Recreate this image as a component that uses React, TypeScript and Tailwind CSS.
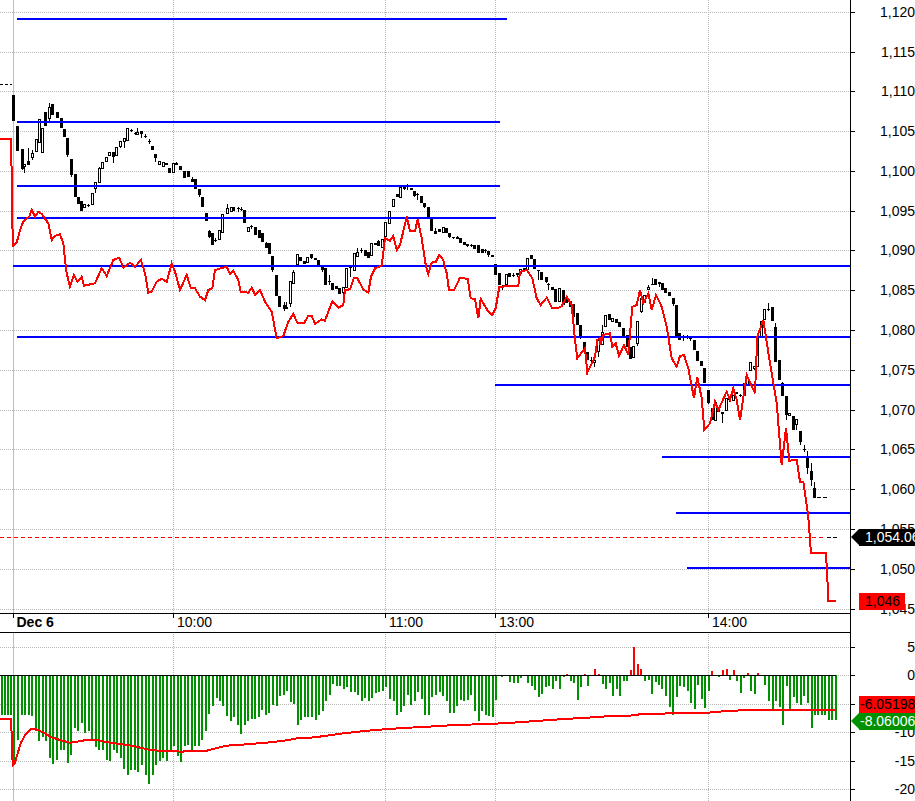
// all series traced at 3x: [x, y] with an origin per crop
const toPx = (pts: number[][], ox: number, oy: number) => pts.map(([x, y]) => [ox + x / 3, oy + y / 3])

const priceLine = [
  ...toPx(
    [[0,207],[33,207],[35,315],[37,420],[38,528],[50,518],[60,480],[70,455],[80,445],[88,440],[95,420],[105,440],[115,425],[125,432],[145,460],[155,510],[165,497],[180,493],[190,520],[195,570],[200,610],[210,650],[222,615],[232,635],[245,620],[252,647],[285,640],[305,595],[320,618],[340,570],[358,563],[370,593],[390,578],[405,590],[423,570],[435,610],[445,668],[455,665],[470,635],[485,626],[500,636],[515,580],[525,605],[540,660],[560,615],[572,653],[585,655],[600,680],[615,690],[625,660],[637,655],[645,600],[680,590],[690,612],[700,602],[715,630],[722,665],[745,668],[755,653],[765,675],[780,660],[795,695],[815,725],[830,805],[850,798],[865,755],[880,732],[892,758],[900,758]],
    0, 70,
  ),
  ...toPx(
    [[0,458],[12,460],[25,437],[35,437],[45,462],[65,448],[75,452],[85,425],[97,395],[115,413],[130,405],[135,360],[150,358],[162,323],[172,325],[190,358],[205,368],[213,320],[225,295],[245,287],[255,205],[270,212],[280,198],[290,240],[300,225],[320,140],[330,183],[345,183],[353,148],[365,205],[378,290],[385,312],[395,278],[408,275],[418,255],[430,270],[440,310],[447,360],[462,360],[480,323],[503,327],[512,385],[525,387],[535,445],[542,387],[565,425],[577,435],[587,415],[598,350],[608,350],[620,347],[655,347],[660,305],[680,300],[697,325],[710,385],[722,405],[740,383],[757,415],[773,415],[785,408],[800,380],[815,405],[825,510],[832,565],[855,535],[862,608],[885,560],[892,510],[900,505]],
    300, 170,
  ),
  ...toPx(
    [[0,225],[10,195],[30,190],[37,230],[47,220],[57,258],[72,225],[85,255],[97,110],[110,105],[120,60],[130,100],[145,70],[155,120],[168,75],[185,110],[200,170],[215,265],[230,290],[240,258],[252,255],[265,295],[282,385],[292,320],[305,385],[313,480],[330,460],[345,395],[355,420],[380,365],[390,390],[400,355],[410,390],[420,450],[440,315],[465,370],[472,200],[490,150],[510,280],[530,400],[545,585],[558,475],[568,572],[590,570],[600,635],[610,635],[625,740],[633,850],[678,850],[683,945],[685,993],[708,993]],
    600, 270,
  ),
]

const signalLine = [
  ...toPx(
    [[0,356],[33,356],[35,405],[38,497],[44,490],[62,430],[75,405],[93,386],[105,386],[130,398],[155,412],[180,420],[210,428],[245,423],[260,419],[285,419],[330,428],[400,438],[450,450],[480,452],[530,453],[545,456],[560,452],[620,452],[650,444],[680,437],[740,433],[810,427],[860,421],[900,413]],
    0, 600,
  ),
  ...toPx(
    [[0,414],[30,413],[75,408],[115,402],[165,396],[225,390],[310,384],[405,379],[465,375],[535,373],[610,370],[680,365],[780,358],[880,352],[900,350]],
    300, 600,
  ),
  ...toPx([[0,351],[18,349],[90,347],[120,343],[185,341],[220,339],[325,338],[380,333],[450,330],[705,329]], 600, 600),
]

// [x, wickTop, bodyTop, bodyBottom, wickBottom, filled]
const candleCrops: { ox: number; oy: number; rows: number[][] }[] = [
  {
    ox: 0,
    oy: 70,
    rows: [
      [40,75,75,152,152,1],[52,168,168,242,242,1],[65,238,238,298,300,1],[73,283,283,292,310,0],[85,235,272,285,285,1],[95,240,250,265,270,0],[107,208,208,245,245,0],[116,148,148,220,220,0],[127,175,175,250,250,0],[136,125,125,168,168,1],[148,100,112,148,160,0],[157,102,102,135,135,1],[170,126,126,143,143,1],[182,145,145,175,175,1],[191,178,178,200,200,1],[202,205,205,255,260,1],[212,267,267,315,320,1],[224,313,313,380,380,1],[233,381,381,403,403,1],[244,392,392,422,422,1],[253,403,403,415,415,0],[265,402,405,407,411,1],[275,368,370,406,406,0],[286,335,335,358,370,0],[296,290,295,338,338,0],[307,277,277,297,297,0],[319,262,262,275,275,0],[328,245,245,257,257,0],[340,245,245,260,278,1],[348,232,232,257,257,0],[361,213,213,232,235,0],[371,205,205,217,235,0],[382,175,175,212,212,0],[392,178,181,184,185,1],[404,186,188,192,194,1],[412,175,185,196,196,0],[424,182,182,192,205,1],[436,193,197,199,204,1],[446,208,214,216,222,1],[457,228,228,240,240,1],[466,252,252,265,275,1],[478,272,272,285,285,0],[488,277,277,290,290,0],[499,280,280,286,286,0],[508,294,294,308,308,1],[520,280,280,310,310,0],[529,276,278,285,285,1],[541,287,287,300,300,1],[553,304,304,325,325,1],[563,304,304,320,320,1],[576,320,326,335,335,1],[584,328,328,358,358,1],[596,358,358,376,382,1],[605,380,380,412,412,1],[617,430,430,452,452,1],[626,480,483,500,503,1],[637,490,490,525,525,1],[646,503,509,511,517,1],[658,480,480,510,510,0],[667,432,432,490,490,0],[680,403,415,433,433,0],[692,411,411,425,425,0],[700,410,412,422,422,1],[713,412,413,415,425,1],[722,412,416,418,423,1],[733,420,420,460,460,1],[743,470,470,485,485,0],[754,464,469,472,478,1],[764,472,472,495,495,1],[776,480,480,503,503,1],[785,490,490,517,517,1],[797,517,520,533,533,1],[808,520,520,553,553,1],[817,558,558,600,605,1],[829,615,615,677,677,1],[838,677,677,710,710,1],[851,695,705,718,722,1],[859,695,712,718,718,0],[871,632,632,702,710,0],[880,600,607,643,643,0],[892,552,552,585,585,0],
    ],
  },
  {
    ox: 300,
    oy: 170,
    rows: [
      [0,262,262,272,272,1],[12,272,272,283,283,1],[22,262,262,278,278,0],[33,252,252,263,268,1],[44,265,265,270,270,1],[54,270,270,290,290,1],[67,292,292,300,305,1],[76,295,295,345,345,1],[88,315,334,336,345,1],[97,338,338,360,360,1],[108,348,348,358,358,1],[118,355,355,372,372,1],[129,350,350,368,385,0],[139,295,295,355,355,0],[150,288,292,295,320,1],[162,250,250,302,302,0],[172,235,247,260,260,0],[183,235,239,242,248,1],[194,240,240,258,258,1],[205,245,245,263,263,1],[214,220,220,257,257,0],[226,218,218,225,225,0],[235,210,212,228,228,1],[247,208,208,233,233,0],[256,155,155,200,200,0],[268,122,122,163,163,0],[280,86,86,112,112,0],[290,72,72,82,82,1],[301,52,52,85,85,0],[311,45,52,55,60,0],[322,42,47,52,60,1],[332,53,53,60,60,1],[343,62,62,77,82,1],[352,70,72,74,90,1],[364,78,78,100,100,1],[373,100,100,112,115,1],[385,112,112,142,142,1],[394,147,147,182,182,1],[406,175,183,193,193,1],[418,176,176,186,186,1],[428,172,172,188,188,0],[439,175,175,190,190,1],[448,188,188,202,205,1],[459,200,202,205,206,1],[470,198,202,206,206,1],[481,205,205,218,218,1],[491,217,217,224,224,1],[502,222,222,228,232,1],[513,222,225,228,230,1],[523,226,226,238,238,1],[534,225,225,250,250,1],[545,238,238,250,250,1],[555,236,239,242,250,1],[565,243,243,255,260,1],[577,256,256,262,262,0],[586,283,283,315,315,1],[598,310,310,345,345,1],[607,345,349,351,360,1],[619,313,313,345,345,0],[628,308,308,320,320,1],[640,310,314,316,322,1],[652,310,310,315,322,0],[661,297,297,313,313,0],[673,295,295,303,303,1],[682,265,265,300,300,0],[694,255,255,268,268,1],[703,267,267,297,297,1],[715,300,301,304,330,1],[724,306,306,330,330,1],[737,322,322,335,340,1],[745,338,341,343,360,1],[757,350,352,360,360,1],[766,357,357,395,395,1],[778,355,355,395,395,0],[790,360,360,405,405,1],[799,382,382,400,400,1],[810,392,392,410,410,1],[820,402,402,440,440,1],[831,430,430,465,465,1],[841,465,465,500,508,1],[852,515,515,540,540,1],[861,545,545,570,570,1],[873,560,571,573,580,1],[883,571,571,578,590,0],[895,510,510,545,560,0],
    ],
  },
  {
    ox: 600,
    oy: 270,
    rows: [
      [7,165,185,225,225,0],[16,135,135,172,172,0],[28,133,133,150,150,1],[37,145,145,155,155,0],[48,147,147,158,158,1],[58,156,156,172,172,1],[70,175,175,205,205,1],[80,195,195,232,232,1],[91,232,232,268,268,1],[100,228,228,265,265,0],[112,152,152,222,228,0],[122,83,83,127,130,0],[132,75,75,100,100,0],[145,45,50,60,60,0],[155,25,42,46,46,1],[166,28,28,44,44,1],[177,37,37,42,50,1],[187,38,38,60,60,1],[196,54,54,68,68,1],[207,65,65,77,77,1],[218,85,85,103,108,1],[229,105,105,200,200,1],[238,188,188,210,210,1],[248,195,202,205,212,1],[260,195,199,202,208,1],[270,200,204,207,214,1],[281,210,210,240,240,1],[292,242,242,272,272,1],[304,273,273,288,288,1],[313,295,295,340,340,1],[325,360,360,398,402,1],[335,415,415,450,450,1],[345,395,395,452,452,0],[355,410,410,425,425,1],[367,425,425,430,458,0],[379,385,385,422,422,0],[388,384,386,391,395,1],[400,375,375,392,392,0],[409,367,367,373,373,1],[420,372,374,377,380,1],[431,340,340,378,378,0],[442,320,320,348,348,0],[451,277,277,302,302,0],[463,288,288,296,300,0],[472,203,203,290,290,0],[483,152,152,205,205,0],[493,117,117,150,150,0],[505,100,116,118,122,1],[517,110,110,152,152,1],[526,160,170,275,275,1],[538,270,270,330,330,1],[547,335,338,377,377,1],[559,378,378,435,450,1],[568,430,430,437,437,0],[580,437,437,480,480,1],[589,448,448,465,480,0],[601,483,483,517,525,1],[611,525,537,539,545,1],[622,543,563,593,612,1],[633,580,603,630,648,1],[643,635,655,683,683,1],
    ],
  },
]

const candles = candleCrops.flatMap(({ ox, oy, rows }) =>
  rows.map(([x, wt, bt, bb, wb, filled]) => ({
    x: Math.round(ox + x / 3),
    wt: Math.round(oy + wt / 3),
    bt: Math.round(oy + bt / 3),
    bb: Math.round(oy + bb / 3),
    wb: Math.round(oy + wb / 3),
    filled: !!filled,
  })),
)

// lower pane histogram, [x, bottom] at 3x, baseline at y=226
const histCrops: { ox: number; rows: number[][] }[] = [
  {
    ox: 0,
    rows: [
      [5,345],[15,345],[23,345],[33,345],[42,497],[53,422],[65,347],[75,345],[86,345],[96,348],[107,395],[117,425],[128,413],[139,425],[150,476],[159,494],[170,480],[182,452],[193,452],[204,491],[214,467],[225,385],[235,393],[245,370],[255,400],[266,395],[276,417],[288,443],[297,450],[310,452],[321,480],[331,483],[341,450],[352,460],[363,476],[373,507],[384,527],[394,510],[405,510],[415,516],[426,497],[437,527],[447,554],[459,527],[468,495],[480,483],[490,475],[501,483],[512,455],[522,440],[533,470],[543,488],[555,440],[565,437],[577,453],[586,440],[597,440],[607,420],[618,395],[628,342],[639,320],[650,295],[660,303],[670,320],[681,350],[692,365],[702,353],[714,375],[724,402],[735,377],[745,365],[755,357],[766,357],[777,352],[787,330],[798,345],[808,340],[820,315],[830,320],[840,290],[851,287],[861,273],[873,308],[882,312],[894,375],
    ],
  },
  {
    ox: 300,
    rows: [
      [3,362],[14,353],[25,353],[36,353],[47,362],[57,345],[69,335],[78,305],[90,285],[100,252],[111,260],[121,258],[132,267],[142,263],[153,276],[164,276],[174,285],[186,305],[195,296],[207,305],[217,296],[228,281],[238,278],[249,275],[258,261],[270,297],[281,305],[291,347],[303,338],[312,320],[323,285],[333,317],[345,303],[355,278],[366,297],[375,347],[387,347],[396,293],[408,287],[420,276],[429,290],[440,303],[451,339],[462,339],[471,320],[483,300],[492,303],[503,300],[513,285],[525,333],[537,365],[546,333],[558,345],[567,350],[579,353],[589,300],[607,233],[618,228],[630,248],[641,251],[653,251],[663,236],[684,251],[696,258],[705,270],[717,293],[726,282],[738,263],[747,258],[759,267],[769,243],[780,267],[791,233],[801,222],[813,243],[822,251],[834,300],[843,261],[855,222],[864,258],[885,207],[896,222],
    ],
  },
  {
    ox: 600,
    rows: [
      [9,254],[18,267],[30,251],[39,288],[51,267],[60,290],[72,243],[81,245],[93,212],[102,142],[114,192],[123,207],[135,245],[147,240],[156,282],[168,248],[177,257],[187,267],[198,288],[210,323],[219,345],[231,293],[240,258],[252,263],[264,275],[273,311],[285,327],[294,257],[306,299],[315,326],[327,275],[336,213],[357,233],[369,210],[381,207],[390,240],[402,210],[411,243],[423,281],[432,236],[444,219],[453,275],[465,284],[474,219],[486,230],[495,255],[507,305],[519,335],[528,305],[540,323],[549,377],[561,258],[570,327],[582,293],[591,311],[603,315],[612,290],[624,309],[636,386],[645,347],[654,347],[666,347],[675,347],[687,362],[696,362],[708,362],
    ],
  },
]

const ZERO = 675
const bars = histCrops.flatMap(({ ox, rows }) =>
  rows.map(([x, y]) => ({
    x: Math.round(ox + x / 3 - 1),
    h: Math.round(Math.abs(y - 226) / 3),
    up: y < 226,
  })),
)

const levels = [
  { y: 19, x1: 17, x2: 507 },
  { y: 122, x1: 17, x2: 500 },
  { y: 186, x1: 17, x2: 500 },
  { y: 218, x1: 17, x2: 496 },
  { y: 266, x1: 13, x2: 850 },
  { y: 337, x1: 17, x2: 850 },
  { y: 385, x1: 495, x2: 850 },
  { y: 457, x1: 662, x2: 850 },
  { y: 513, x1: 676, x2: 850 },
  { y: 568, x1: 687, x2: 850 },
]

const priceTicks = [
  ['1,120', 12], ['1,115', 51.5], ['1,110', 91], ['1,105', 131], ['1,100', 171], ['1,095', 211], ['1,090', 250], ['1,085', 290],
  ['1,080', 330], ['1,075', 370], ['1,070', 410], ['1,065', 449], ['1,060', 489], ['1,055', 529], ['1,050', 569], ['1,045', 609],
] as [string, number][]

const lowerTicks = [['5', 647], ['0', 675], ['-5', 704], ['-10', 732], ['-15', 761], ['-20', 789]] as [string, number][]

const times = [
  { x: 173, label: '10:00' },
  { x: 385, label: '11:00' },
  { x: 495, label: '13:00' },
  { x: 708, label: '14:00' },
]

const linePath = (pts: number[][]) => pts.map(([x, y]) => `${x.toFixed(1)},${y.toFixed(1)}`).join(' ')

function Chart() {
  return (
    <svg width={915} height={801} className="block">
      {/* grid */}
      <g stroke="#b8b8b8" strokeDasharray="1 1" shapeRendering="crispEdges">
        {[...priceTicks, ...lowerTicks].map(([label, y]) => (
          <line key={label} x1={0} x2={850} y1={Math.round(y) + 0.5} y2={Math.round(y) + 0.5} />
        ))}
        {times.map((t) => (
          <g key={t.x}>
            <line x1={t.x + 0.5} x2={t.x + 0.5} y1={0} y2={613} />
            <line x1={t.x + 0.5} x2={t.x + 0.5} y1={632} y2={801} />
          </g>
        ))}
      </g>
      <g stroke="#bdbdbd" shapeRendering="crispEdges">
        <line x1={13.5} x2={13.5} y1={0} y2={613} />
        <line x1={13.5} x2={13.5} y1={633} y2={801} />
      </g>

      {/* last price dashes */}
      <line x1={0} x2={826} y1={537.5} y2={537.5} stroke="#ff0000" strokeDasharray="4 3" shapeRendering="crispEdges" />
      <line x1={827} x2={838} y1={537.5} y2={537.5} stroke="#000" strokeDasharray="4 2" shapeRendering="crispEdges" />
      <line x1={0} x2={12} y1={84.5} y2={84.5} stroke="#000" strokeDasharray="3 2" shapeRendering="crispEdges" />
      <line x1={817} x2={827} y1={497.5} y2={497.5} stroke="#000" strokeDasharray="4 2" shapeRendering="crispEdges" />

      {/* candles */}
      <g shapeRendering="crispEdges">
        {candles.map((c, i) => (
          <g key={i}>
            <line x1={c.x + 0.5} x2={c.x + 0.5} y1={c.wt} y2={c.wb} stroke="#000" />
            {c.filled ? (
              <rect x={c.x - 1} y={c.bt} width={3} height={Math.max(c.bb - c.bt, 1)} fill="#000" />
            ) : (
              <rect x={c.x - 0.5} y={c.bt + 0.5} width={2} height={Math.max(c.bb - c.bt - 1, 1)} fill="#fff" stroke="#000" />
            )}
          </g>
        ))}
      </g>

      {/* levels */}
      <g fill="#0000ff" shapeRendering="crispEdges">
        {levels.map((l) => (
          <rect key={l.y} x={l.x1} y={l.y - 1} width={l.x2 - l.x1} height={2} />
        ))}
      </g>

      <polyline points={linePath(priceLine)} fill="none" stroke="#ff0000" strokeWidth={2} shapeRendering="crispEdges" />

      {/* time axis */}
      <rect x={0} y={613} width={850} height={19} fill="#fff" />
      <g stroke="#000" shapeRendering="crispEdges">
        <line x1={0} x2={850} y1={613.5} y2={613.5} />
        <line x1={0} x2={850} y1={632.5} y2={632.5} />
        <line x1={13.5} x2={13.5} y1={613} y2={618} />
        {times.map((t) => (
          <line key={t.x} x1={t.x + 0.5} x2={t.x + 0.5} y1={613} y2={618} />
        ))}
      </g>
      <text x={16.5} y={627} fontSize={14} fontWeight="bold" fill="#000">
        Dec 6
      </text>
      {times.map((t) => (
        <text key={t.x} x={t.x + 4} y={627} fontSize={14} fill="#000">
          {t.label}
        </text>
      ))}

      {/* lower pane */}
      <g shapeRendering="crispEdges">
        {bars.map((b, i) => (
          <rect key={i} x={b.x} y={b.up ? ZERO - b.h : ZERO} width={2} height={b.h} fill={b.up ? '#ff0000' : '#009000'} />
        ))}
        <line x1={0} x2={836} y1={675.5} y2={675.5} stroke="#000" />
      </g>
      <polyline points={linePath(signalLine)} fill="none" stroke="#ff0000" strokeWidth={2} shapeRendering="crispEdges" />

      {/* value axis */}
      <rect x={851} y={0} width={64} height={801} fill="#fff" />
      <g stroke="#000" shapeRendering="crispEdges">
        <line x1={850.5} x2={850.5} y1={0} y2={801} />
        {[...priceTicks, ...lowerTicks].map(([label, y]) => (
          <line key={label} x1={850} x2={855} y1={Math.round(y) + 0.5} y2={Math.round(y) + 0.5} />
        ))}
      </g>
      {[...priceTicks, ...lowerTicks].map(([label, y]) => (
        <text key={label} x={915} y={y + 5} fontSize={14} textAnchor="end" fill="#000">
          {label}
        </text>
      ))}
    </svg>
  )
}

export default function App() {
  return (
    <div className="relative h-[801px] w-[915px] overflow-hidden bg-white font-['Liberation_Sans',Arial,sans-serif]">
      <Chart />

      {/* last price flag */}
      <div className="absolute left-[851px] top-[529px] flex h-[17px] w-[64px] overflow-hidden">
        <div className="h-0 w-0 border-y-[8.5px] border-r-[8px] border-y-transparent border-r-black" />
        <div className="flex-1 overflow-hidden whitespace-nowrap bg-black pl-[6px] text-[14px] leading-[17px] text-white">
          1,054.06
        </div>
      </div>

      <div className="absolute left-[859px] top-[593px] h-[17px] w-[46px] overflow-hidden whitespace-nowrap bg-[#ff0000] pl-[6px] text-[14px] leading-[17px] text-black">
        1,046
      </div>

      <div className="absolute left-[859px] top-[696px] h-[17px] w-[56px] overflow-hidden whitespace-nowrap bg-[#ff0000] pl-[1px] text-[14px] leading-[17px] text-black">
        -6.05198
      </div>

      <div className="absolute left-[851px] top-[713px] flex h-[17px] w-[64px] overflow-hidden">
        <div className="h-0 w-0 border-y-[8.5px] border-r-[8px] border-y-transparent border-r-[#009000]" />
        <div className="flex-1 overflow-hidden whitespace-nowrap bg-[#009000] pl-[1px] text-[14px] leading-[17px] text-white">
          -8.06006
        </div>
      </div>
    </div>
  )
}
